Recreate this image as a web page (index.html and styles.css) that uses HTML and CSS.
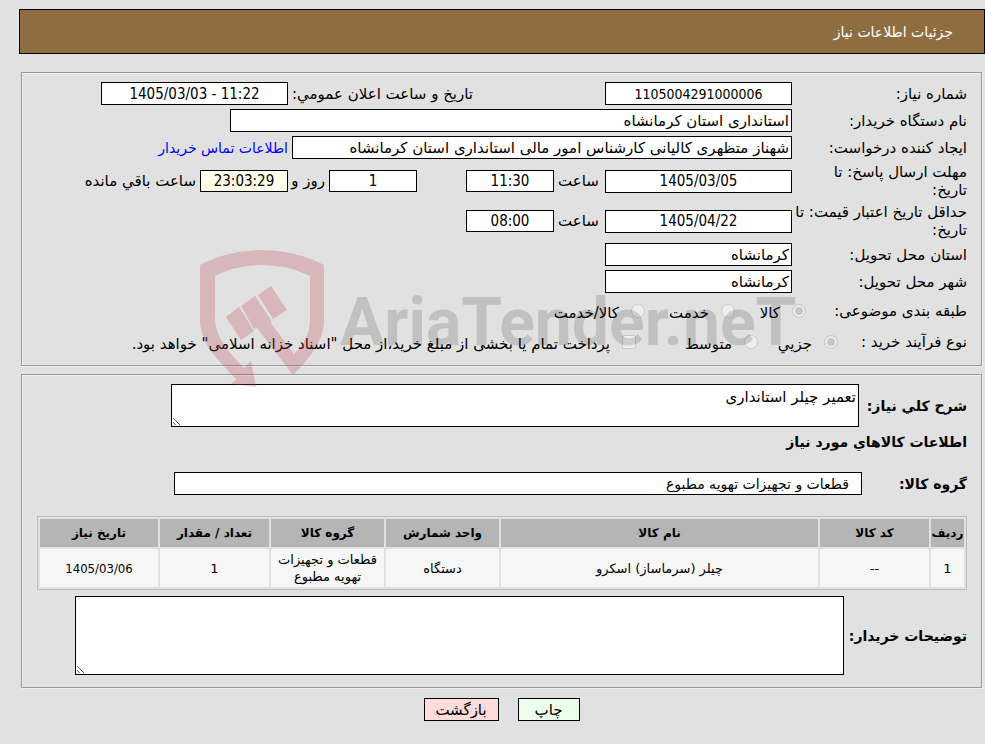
FILE: index.html
```html
<!DOCTYPE html>
<html lang="fa" dir="rtl">
<head>
<meta charset="utf-8">
<title>جزئیات اطلاعات نیاز</title>
<link rel="stylesheet" href="styles.css">
</head>
<body>
<header class="titlebar">جزئیات اطلاعات نیاز</header>
<main>
<fieldset class="panel details">
  <div class="row">
    <label class="name" for="no">شماره نیاز:</label>
    <input class="box mid serial" id="no" value="1105004291000006" readonly>
    <label class="announce" for="pub">تاریخ و ساعت اعلان عمومي:</label>
    <input class="box mid" id="pub" dir="ltr" value="1405/03/03 - 11:22" readonly>
  </div>
  <div class="row">
    <label class="name" for="org">نام دستگاه خریدار:</label>
    <input class="box org" id="org" value="استانداری استان کرمانشاه" readonly>
  </div>
  <div class="row">
    <label class="name" for="creator">ایجاد کننده درخواست:</label>
    <input class="box creator" id="creator" value="شهناز متظهری کالیانی کارشناس امور مالی استانداری استان کرمانشاه" readonly>
    <a class="contact" href="#contact">اطلاعات تماس خریدار</a>
  </div>
  <div class="row tall">
    <label class="name" for="due">مهلت ارسال پاسخ: تا<br>تاریخ:</label>
    <input class="box mid" id="due" value="1405/03/05" readonly>
    <label class="hour" for="duehour">ساعت</label>
    <input class="box small" id="duehour" value="11:30" readonly>
    <input class="box small days" id="days" value="1" readonly>
    <label class="and" for="days">روز و</label>
    <input class="box small left" id="remain" value="23:03:29" readonly>
    <label class="remain" for="remain">ساعت باقي مانده</label>
  </div>
  <div class="row tall">
    <label class="name" for="valid">حداقل تاریخ اعتبار قیمت: تا<br>تاریخ:</label>
    <input class="box mid" id="valid" value="1405/04/22" readonly>
    <label class="hour" for="validhour">ساعت</label>
    <input class="box small" id="validhour" value="08:00" readonly>
  </div>
  <div class="row">
    <label class="name" for="province">استان محل تحویل:</label>
    <input class="box place" id="province" value="کرمانشاه" readonly>
  </div>
  <div class="row">
    <label class="name" for="city">شهر محل تحویل:</label>
    <input class="box place" id="city" value="کرمانشاه" readonly>
  </div>
  <div class="row options">
    <span class="name short">طبقه بندی موضوعی:</span>
    <input class="dot" type="radio" name="kind" id="k1" checked disabled><label class="opt k1" for="k1">کالا</label>
    <input class="dot" type="radio" name="kind" id="k2" disabled><label class="opt k2" for="k2">خدمت</label>
    <input class="dot" type="radio" name="kind" id="k3" disabled><label class="opt" for="k3">کالا/خدمت</label>
  </div>
  <div class="row options">
    <span class="name process">نوع فرآیند خرید :</span>
    <input class="dot" type="radio" name="proc" id="p1" checked disabled><label class="opt p1" for="p1">جزیي</label>
    <input class="dot" type="radio" name="proc" id="p2" disabled><label class="opt p2" for="p2">متوسط</label>
    <input class="dot tick" type="checkbox" id="p3" disabled><label class="opt" for="p3">پرداخت تمام یا بخشی از مبلغ خرید،از محل "اسناد خزانه اسلامی" خواهد بود.</label>
  </div>
  <div class="watermark" aria-hidden="true">
    <span class="brand">AriaTender.neT</span>
    <svg class="shield" viewBox="0 0 126 138" width="126" height="138">
      <path d="M0 15Q29 0 62 0T124 15V70C124 93 106 112 93 125L57 78L54 79L41 56L55 46L71 70L71 73L94 104C104 94 110 84 110 70V26Q88 15 62 15T15 26V68C15 90 33 106 44 118L51 111L56 137L31 134L36 129C20 112 0 94 0 70Z"/>
      <path d="M26 67L39 57L54 81L41 90ZM58 45L71 36L87 60L73 69Z"/>
    </svg>
  </div>
</fieldset>
<fieldset class="panel goods">
  <div class="row summary">
    <label class="strong summarylabel" for="summary">شرح کلي نیاز:</label>
    <textarea class="box area" id="summary" readonly>تعمیر چیلر استانداری</textarea>
  </div>
  <h2 class="strong">اطلاعات کالاهاي مورد نیاز</h2>
  <div class="row group">
    <label class="strong grouplabel" for="group">گروه کالا:</label>
    <input class="box groupbox" id="group" value="قطعات و تجهیزات تهویه مطبوع" readonly>
  </div>
  <table class="items">
    <colgroup><col class="c1"><col class="c2"><col><col class="c4"><col class="c4"><col class="c2"><col class="c7"></colgroup>
    <thead><tr><th>ردیف</th><th>کد کالا</th><th>نام کالا</th><th>واحد شمارش</th><th>گروه کالا</th><th>تعداد / مقدار</th><th>تاریخ نیاز</th></tr></thead>
    <tbody><tr><td>1</td><td>--</td><td>چیلر (سرماساز) اسکرو</td><td>دستگاه</td><td>قطعات و تجهیزات تهویه مطبوع</td><td>1</td><td class="date">1405/03/06</td></tr></tbody>
  </table>
  <div class="row notes">
    <label class="strong noteslabel" for="notes">توضیحات خریدار:</label>
    <textarea class="box area tallarea" id="notes" readonly></textarea>
  </div>
</fieldset>
<div class="actions">
  <button class="print" type="button">چاپ</button>
  <button class="back" type="button">بازگشت</button>
</div>
</main>
</body>
</html>
```
FILE: styles.css
```css
* { box-sizing: border-box; }
body {
  margin: 0;
  padding: 9px 0 0 19px;
  background: #e1e1e1;
  color: #000;
  font: 15px/18px "DejaVu Sans", sans-serif;
}
input, textarea, button { font: inherit; color: inherit; margin: 0; }
.titlebar {
  padding: 13px 31px 12px;
  border: 1px solid #000;
  background: #8f6d40;
  color: #fff;
  font-size: 14px;
}
main { padding: 18px 3px 0 2px; }
.panel {
  position: relative;
  margin: 0 0 8px;
  padding: 9px 14px 6px 15px;
  border: 1px solid #999;
  box-shadow: inset 1px 1px #f0f0f0, 1px 1px #f0f0f0;
  min-width: 0;
}
.row { display: flex; align-items: center; gap: 4px; margin-bottom: 4px; white-space: nowrap; }
.name { flex: 0 0 171px; min-width: 0; }
.box { height: 23px; padding: 0 2px; border: 1px solid #000; border-radius: 0; background: #fff; min-width: 0; }
.mid, .small { font-family: "DejaVu Sans Condensed", "DejaVu Sans", sans-serif; text-align: center; }
.mid { width: 187px; }
.serial { font-size: 14px; }
.announce { flex: 0 0 309px; text-align: left; }
.org { width: 562px; }
.creator { width: 500px; }
.contact { color: #00f; font-size: 14px; text-decoration: none; }
.tall { height: 36px; }
.hour { flex: 0 0 43px; text-align: left; }
.small { width: 88px; height: 22px; }
.days { margin-right: 45px; }
.and { flex: 0 0 33px; min-width: 0; }
.left { background: #ffffec; }
.place { width: 187px; }
.options { height: 27px; }
.short { flex-basis: 157px; }
.process { flex-basis: 125px; }
.dot {
  appearance: none;
  flex: none;
  width: 14px;
  height: 14px;
  border: 1px solid #cbcbcb;
  border-radius: 50%;
  background: #efefef;
}
.dot:checked { background: #c6c6c6; box-shadow: inset 0 0 0 2px #efefef; }
.tick { border-radius: 2px; }
.opt { margin-right: 8px; padding-top: 5px; }
.k1 { width: 41px; }
.k2 { width: 60px; }
.p1 { width: 50px; }
.p2 { width: 92px; }
.watermark { position: absolute; top: 177px; left: 178px; z-index: 1; pointer-events: none; direction: ltr; }
.shield { display: block; fill: rgba(190, 70, 78, 0.27); }
.brand {
  position: absolute;
  left: 140px;
  top: 33px;
  font: bold 66px/80px Roboto, sans-serif;
  color: rgba(0, 0, 0, 0.14);
}
.strong { margin: 0; font-size: 14px; line-height: 18px; font-weight: bold; }
.area { display: block; width: 688px; height: 43px; padding: 3px 2px; resize: both; }
.summary { margin-bottom: 6px; }
.summarylabel { flex: 0 0 104px; }
.grouplabel { flex: 0 0 101px; }
.group { margin: 21px 0; }
.groupbox { width: 688px; padding: 0 12px; font-size: 14px; }
.items {
  width: 100%;
  table-layout: fixed;
  border: 1px solid #bdbdbd;
  border-spacing: 2px;
  font-size: 13px;
  line-height: 17px;
  text-align: center;
}
.items th { height: 28px; padding: 0; background: #b5b5b5; font-size: 12px; }
.items td { height: 38px; padding: 0 4px; background: #f7f7f7; }
.items .date { font-family: "DejaVu Sans Condensed", "DejaVu Sans", sans-serif; }
.c1 { width: 33px; }
.c2 { width: 109px; }
.c4 { width: 113px; }
.c7 { width: 118px; }
.notes { margin: 6px 0; }
.noteslabel { flex: 0 0 119px; }
.tallarea { width: 769px; height: 79px; }
.actions { display: flex; justify-content: center; gap: 19px; padding-top: 2px; }
.actions button { height: 23px; padding: 0 8px; border: 1px solid #000; border-radius: 0; }
.print { width: 62px; background: #ecffec; }
.back { width: 75px; background: #ffdcdc; }
```
